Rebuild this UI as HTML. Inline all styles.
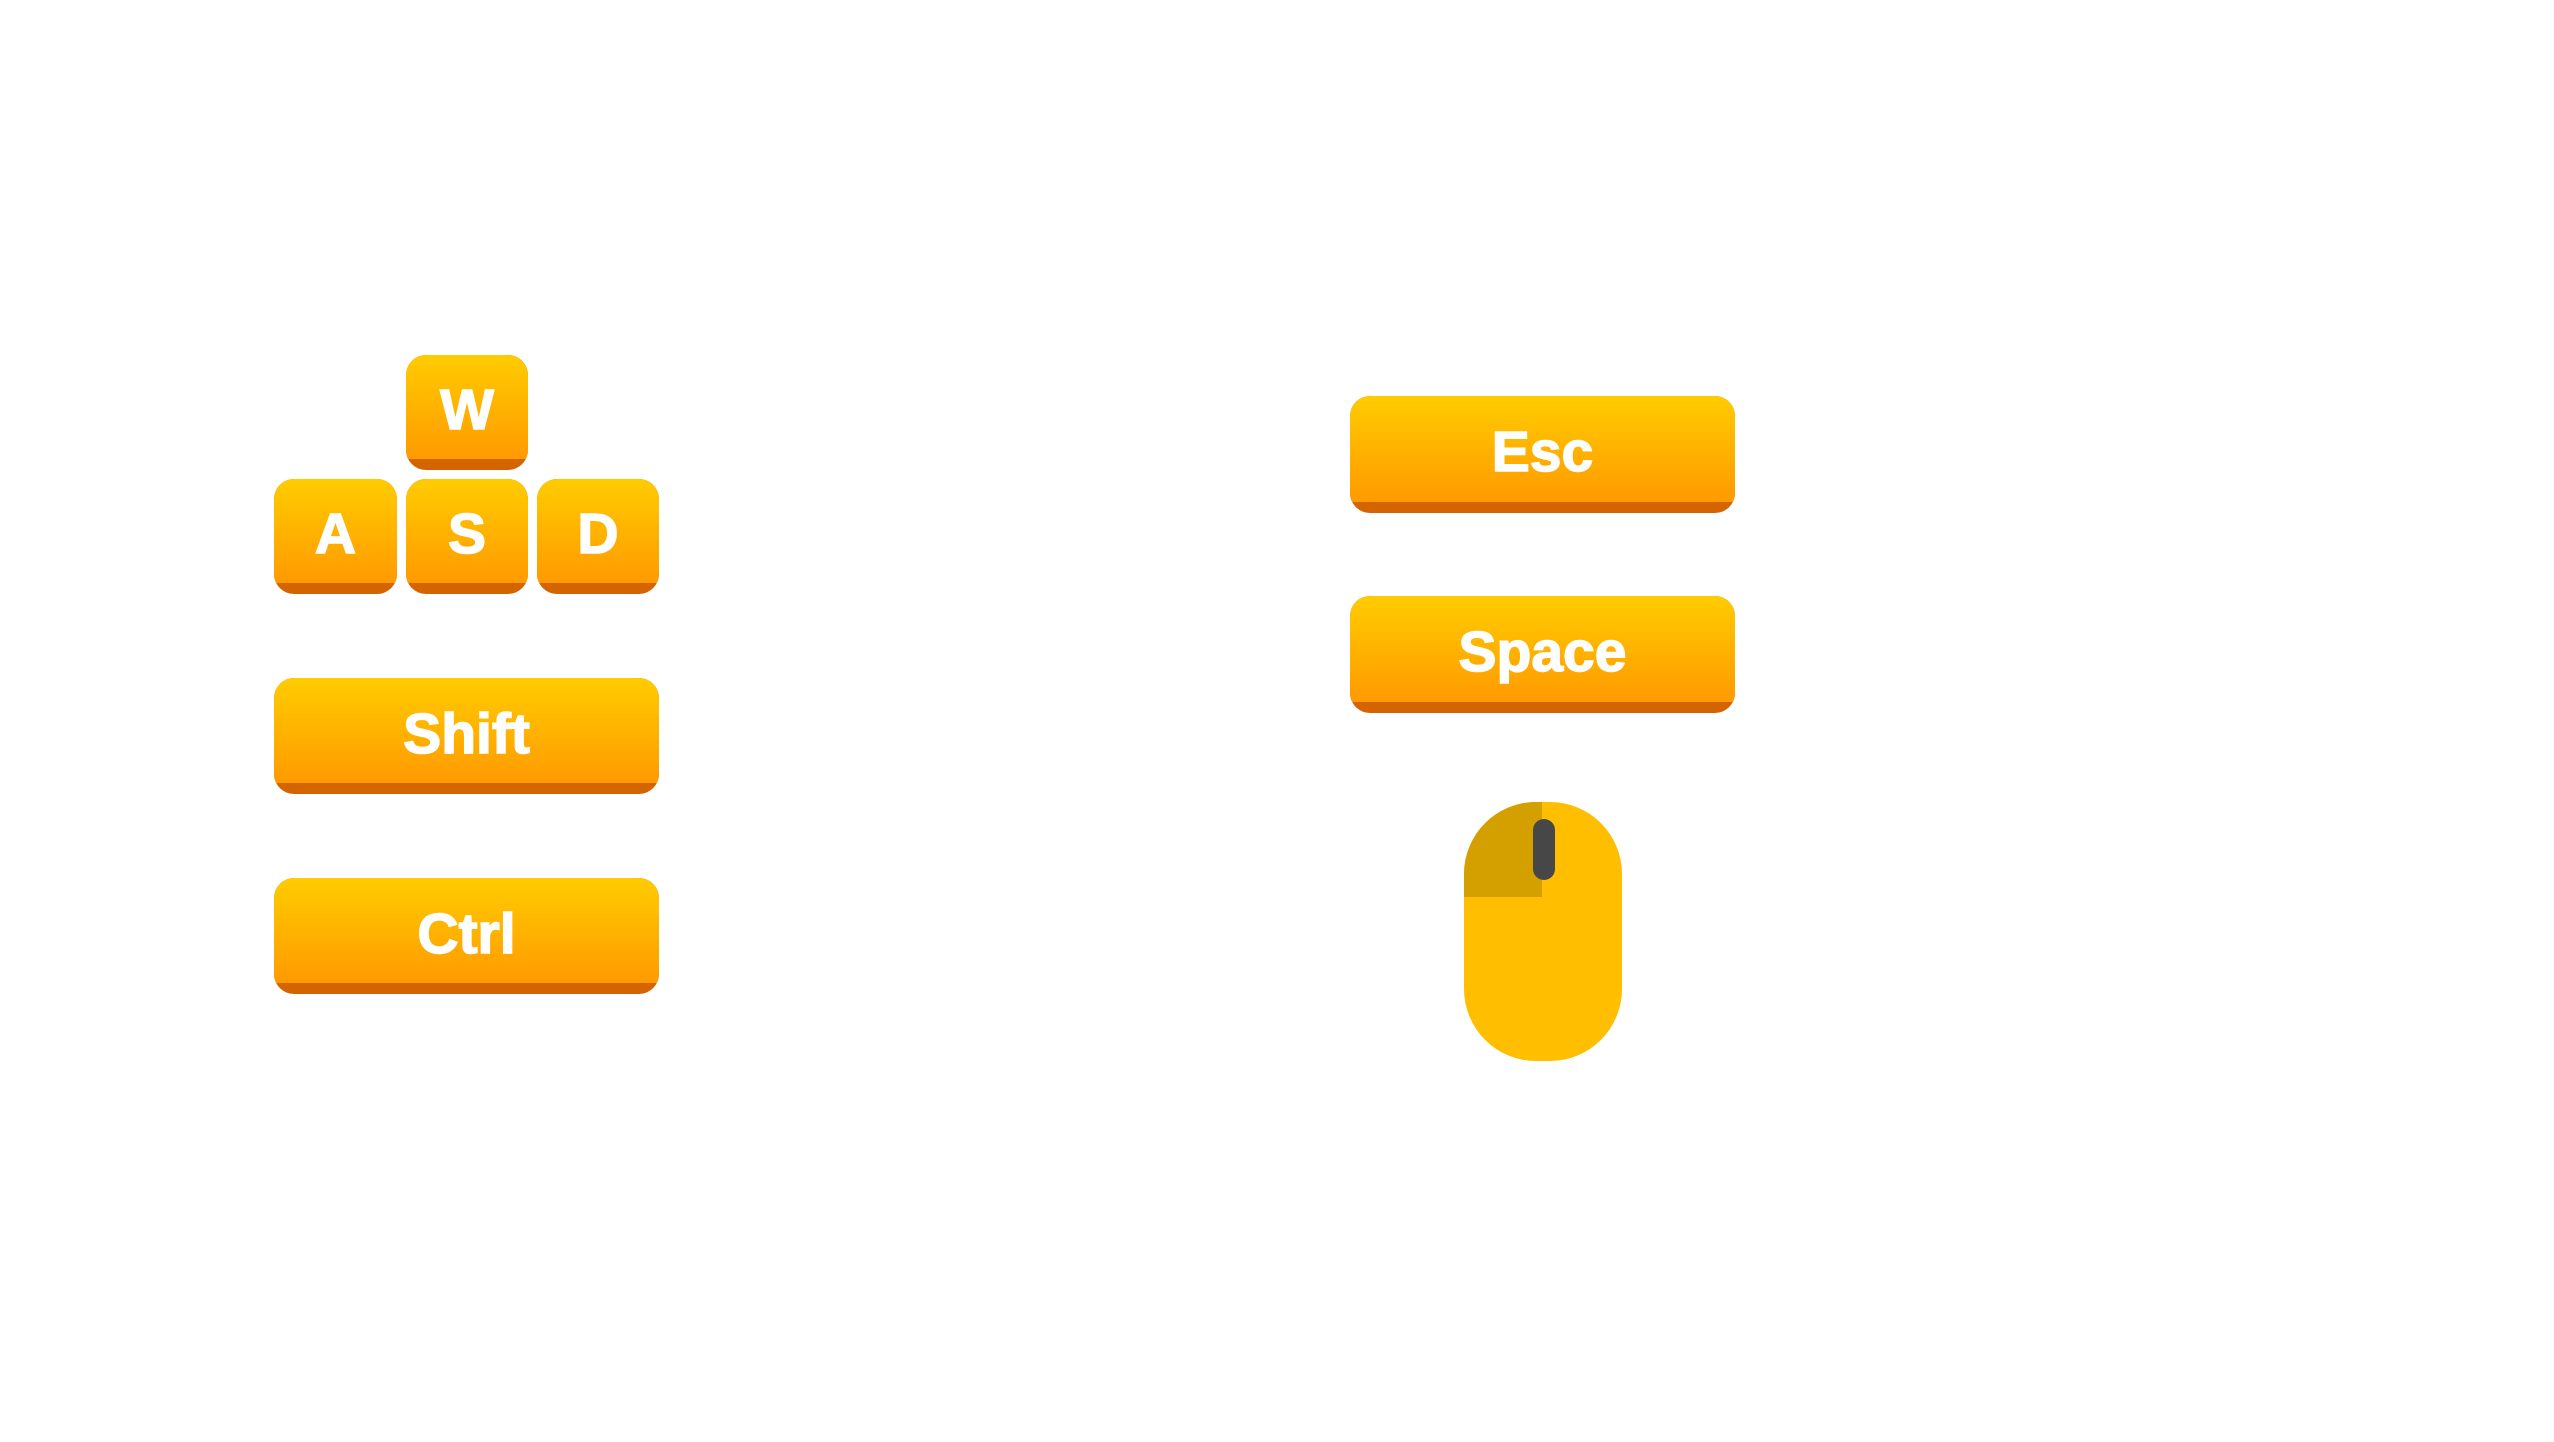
<!DOCTYPE html>
<html><head><meta charset="utf-8"><style>
html,body{margin:0;padding:0;background:#fff;width:2554px;height:1442px;overflow:hidden;position:relative}
.k{position:absolute;border-radius:20px;overflow:hidden;background:#D46400}
.k .f{position:absolute;left:0;right:0;top:0;bottom:11px;padding-top:6px;box-sizing:border-box;background:linear-gradient(#FFCC00,#FF9A00);border-radius:20px 20px 0 0;display:flex;align-items:center;justify-content:center;color:#fff;font:bold 57px "Liberation Sans",sans-serif;-webkit-text-stroke:1.5px #fff}
</style></head><body>
<div class="k" style="left:406px;top:355px;width:122px;height:115px"><div class="f">W</div></div>
<div class="k" style="left:274px;top:479px;width:123px;height:115px"><div class="f">A</div></div>
<div class="k" style="left:406px;top:479px;width:122px;height:115px"><div class="f">S</div></div>
<div class="k" style="left:537px;top:479px;width:122px;height:115px"><div class="f">D</div></div>
<div class="k" style="left:274px;top:678px;width:385px;height:116px"><div class="f">Shift</div></div>
<div class="k" style="left:274px;top:878px;width:385px;height:116px"><div class="f">Ctrl</div></div>
<div class="k" style="left:1350px;top:396px;width:385px;height:117px"><div class="f">Esc</div></div>
<div class="k" style="left:1350px;top:596px;width:385px;height:117px"><div class="f">Space</div></div>
<svg style="position:absolute;left:0;top:0" width="2554" height="1442">
<defs><clipPath id="m"><rect x="1464" y="802" width="158" height="259" rx="72" ry="72"/></clipPath></defs>
<g clip-path="url(#m)">
<rect x="1464" y="802" width="158" height="259" fill="#FFBE00"/>
<rect x="1464" y="802" width="78" height="95" fill="#D4A000"/>
</g>
<rect x="1533" y="819" width="22" height="61" rx="11" fill="#474747"/>
</svg>
</body></html>
